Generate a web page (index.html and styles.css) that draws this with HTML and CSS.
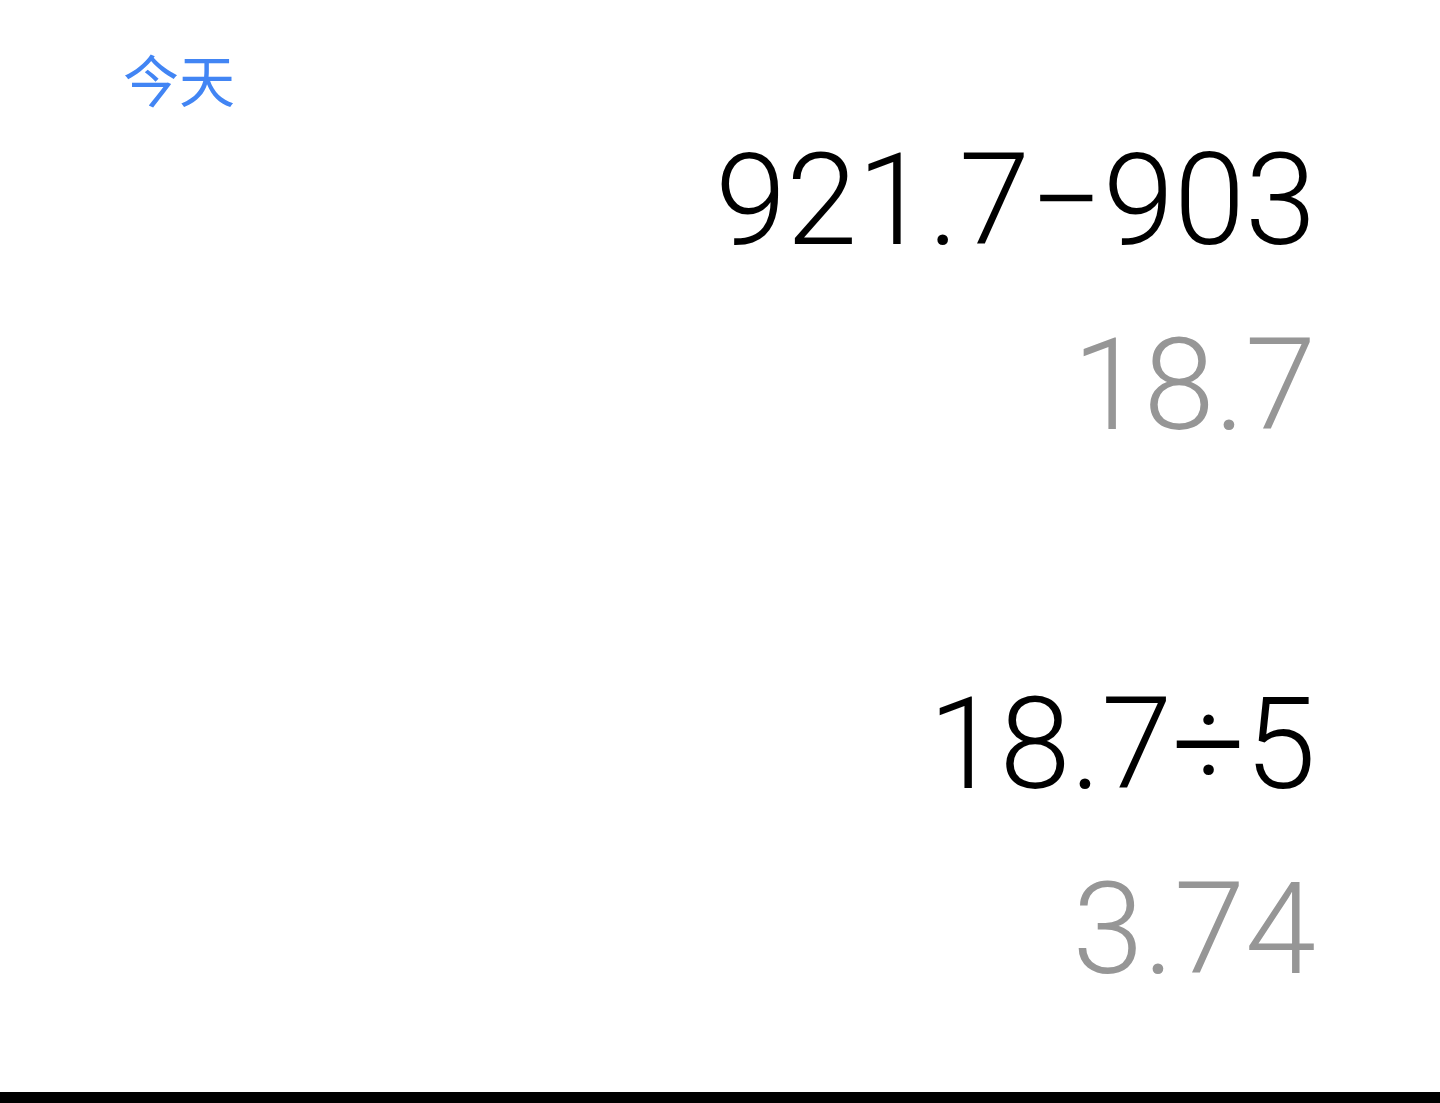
FILE: index.html
```html
<!DOCTYPE html>
<html lang="zh-CN">

<head>
    <meta charset="UTF-8">
    <meta name="viewport" content="width=device-width, initial-scale=1.0">
    <title>计算器 - 历史记录</title>
    <link rel="stylesheet" href="styles.css">
</head>

<body>
    <div class="screen">
        <div class="history">
            <p class="day-label">今天</p>

            <div class="entry">
                <p class="expression">921.7−903</p>
                <p class="result">18.7</p>
            </div>
            <div class="entry">
                <p class="expression">18.7÷5</p>
                <p class="result">3.74</p>
            </div>
        </div>
        <div class="nav-bar"></div>
    </div>
</body>

</html>
```

FILE: styles.css
```css
* {
    box-sizing: border-box;
    margin: 0;
    padding: 0;
}

body {
    background-color: #ffffff;
    font-family: Roboto, "Noto Sans", "Noto Sans CJK SC", sans-serif;
}

.screen {
    height: 1103px;
    display: flex;
    flex-direction: column;
    overflow: hidden;
}

/*HISTORY*/
.history {
    flex: 1;
    min-height: 0;
    overflow: hidden;
    display: flex;
    flex-direction: column;
    gap: 174px;
    padding: 50px 124px 0 123px;
}

.day-label {
    font-family: "Noto Sans CJK SC", "Noto Sans", sans-serif;
    font-size: 56px;
    line-height: 56px;
    color: #4285f4;
    align-self: flex-start;
    margin-bottom: -172px;
}

.entry {
    display: flex;
    flex-direction: column;
    align-items: flex-end;
    flex-shrink: 0;
}

.expression,
.result {
    font-size: 128px;
    font-weight: 300;
    line-height: 185px;
    white-space: nowrap;
}

.expression {
    color: #000000;
}

.result {
    color: #969696;
}

/*NAV BAR*/
.nav-bar {
    flex-shrink: 0;
    height: 11px;
    background-color: #000000;
}
```
